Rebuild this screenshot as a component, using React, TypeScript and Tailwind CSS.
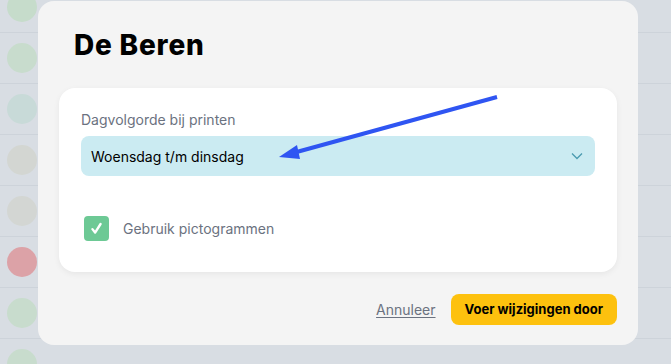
import React from 'react';

const rows = [
  'bg-[#c6dccb]',
  'bg-[#c8dccd]',
  'bg-[#c8dad8]',
  'bg-[#d3d6d2]',
  'bg-[#d3d6d3]',
  'bg-[#dca2a7]',
  'bg-[#c8dccd]',
  'bg-[#c8dccd]',
];

const App: React.FC = () => {
  return (
    <div className="relative h-[364px] w-[671px] overflow-hidden bg-[#d8dde3] font-['Inter',sans-serif]">
      {/* background list under the overlay */}
      <div className="-mt-[18px] flex flex-col">
        {rows.map((color, i) => (
          <div key={i} className="flex h-[51px] items-center border-b border-[#cdd3da] pl-[7px]">
            <div className={`h-[30px] w-[30px] shrink-0 rounded-full ${color}`} />
            {i === rows.length - 1 && (
              <span className="ml-[16px] mt-[30px] text-[15px] text-[#9aa1aa]">Fijne dagen</span>
            )}
          </div>
        ))}
      </div>

      {/* modal */}
      <div className="absolute left-[38px] top-[1px] flex h-[344px] w-[600px] flex-col rounded-[16px] bg-[#f4f4f4] px-[21px]">
        <h1 className="ml-[15px] mt-[28px] text-[28px] font-extrabold leading-[32px] tracking-[0.8px] text-black">De Beren</h1>

        <div className="mt-[27px] flex h-[184px] flex-col rounded-[16px] bg-white px-[22px] shadow-[0_2px_6px_rgba(0,0,0,0.06)]">
          <label className="mt-[23px] text-[14px] leading-[18px] text-[#6b7280]">Dagvolgorde bij printen</label>
          <div className="relative mt-[7px] flex h-[40px] items-center justify-between rounded-[8px] bg-[#cbebf2] pl-[10px] pr-[12px]">
            <span className="text-[14px] font-normal text-black">Woensdag t/m dinsdag</span>
            <svg width="12" height="8" viewBox="0 0 12 8" fill="none">
              <path d="M1 1.5l5 5 5-5" stroke="#4a9bb0" strokeWidth="1.3" />
            </svg>
          </div>

          <div className="mt-[40px] flex items-center">
            <div className="ml-[3px] flex h-[25px] w-[25px] items-center justify-center rounded-[4px] bg-[#6dc995]">
              <svg width="15" height="15" viewBox="0 0 14 14" fill="none">
                <path d="M3.2 7.6l2.5 3.2L10.8 2.8" stroke="white" strokeWidth="2.2" strokeLinecap="round" strokeLinejoin="round" />
              </svg>
            </div>
            <span className="ml-[14px] text-[14px] text-[#6b7280]">Gebruik pictogrammen</span>
          </div>
        </div>

        <div className="mt-[22px] flex items-center justify-end">
          <button className="mr-[15px] text-[14px] text-[#6b7280] underline underline-offset-2">Annuleer</button>
          <button className="h-[31px] rounded-[8px] bg-[#fdc10e] px-[14px] text-[13px] font-bold text-black">
            Voer wijzigingen door
          </button>
        </div>
      </div>

      {/* annotation arrow */}
      <svg className="pointer-events-none absolute left-0 top-0" width="671" height="364">
        <line x1="497" y1="97" x2="293" y2="153" stroke="#2f55f2" strokeWidth="4" />
        <path d="M279 157 L297 145 L300 159 Z" fill="#2f55f2" />
      </svg>
    </div>
  );
};

export default App;
